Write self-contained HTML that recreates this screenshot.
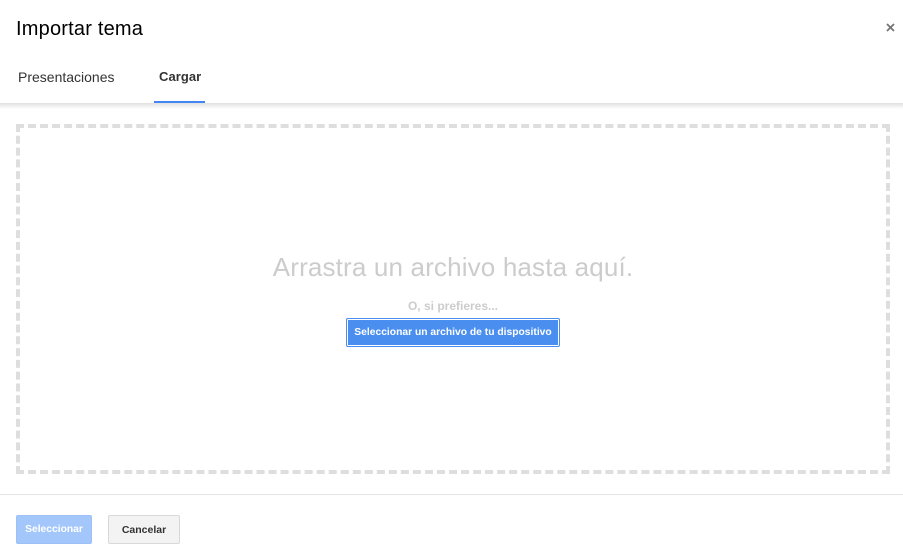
<!DOCTYPE html>
<html lang="es">
<head>
<meta charset="utf-8">
<title>Importar tema</title>
<style>
html,body{margin:0;padding:0;background:#fff}
body{width:903px;height:554px;position:relative;overflow:hidden;font-family:"Liberation Sans",Arial,sans-serif}
div{position:absolute;white-space:nowrap;box-sizing:border-box}
</style>
</head>
<body>
<div style="left:16px;top:17px;font-size:20px;line-height:24px;color:#000;letter-spacing:.2px">Importar tema</div>
<svg style="position:absolute;left:886px;top:23px" width="9" height="9" viewBox="0 0 9 9"><path d="M1 1L8 8M8 1L1 8" stroke="#757575" stroke-width="1.8" fill="none"/></svg>
<div style="left:18px;top:68px;font-size:14px;line-height:18px;color:#333">Presentaciones</div>
<div style="left:159px;top:68px;font-size:13px;line-height:18px;color:#333;font-weight:bold;letter-spacing:.05px">Cargar</div>
<div style="left:154px;top:101px;width:51px;height:2px;background:#4285f4"></div>
<div style="left:0;top:103px;width:903px;height:6px;background:linear-gradient(#e0e0e0,#fff)"></div>
<svg style="position:absolute;left:16px;top:124px" width="874" height="350" viewBox="0 0 874 350" fill="none" stroke="#dedede" stroke-width="4">
<path d="M0 2H874" stroke-dasharray="8 4.028"/>
<path d="M0 348H874" stroke-dasharray="8 4.028"/>
<path d="M2 0V350" stroke-dasharray="8 3.793"/>
<path d="M872 0V350" stroke-dasharray="8 3.793"/>
</svg>
<div style="left:16px;width:874px;top:250px;text-align:center;font-size:26px;line-height:34px;color:#ccc;letter-spacing:.16px">Arrastra un archivo hasta aquí.</div>
<div style="left:16px;width:874px;top:298px;text-align:center;font-size:12px;line-height:16px;color:#ccc;font-weight:bold">O, si prefieres...</div>
<div style="left:346px;top:318px;width:214px;height:29px;background:#4a8ff0;border:1px solid #4a8ff0;box-shadow:inset 0 0 0 1px #fff;border-radius:2px;color:#fff;font-size:10.3px;font-weight:bold;line-height:27px;text-align:center">Seleccionar un archivo de tu dispositivo</div>
<div style="left:0;top:494px;width:903px;height:1px;background:#e4e4e4"></div>
<div style="left:16px;top:515px;width:76px;height:29px;background:#a3c6fb;border:1px solid #9cc0f8;border-radius:2px;color:#fff;font-size:10.3px;font-weight:bold;line-height:28px;text-align:center">Seleccionar</div>
<div style="left:108px;top:515px;width:72px;height:29px;background:#f3f3f3;border:1px solid #d8d8d8;border-radius:2px;color:#333;font-size:10.5px;font-weight:bold;line-height:28px;text-align:center">Cancelar</div>
</body>
</html>
